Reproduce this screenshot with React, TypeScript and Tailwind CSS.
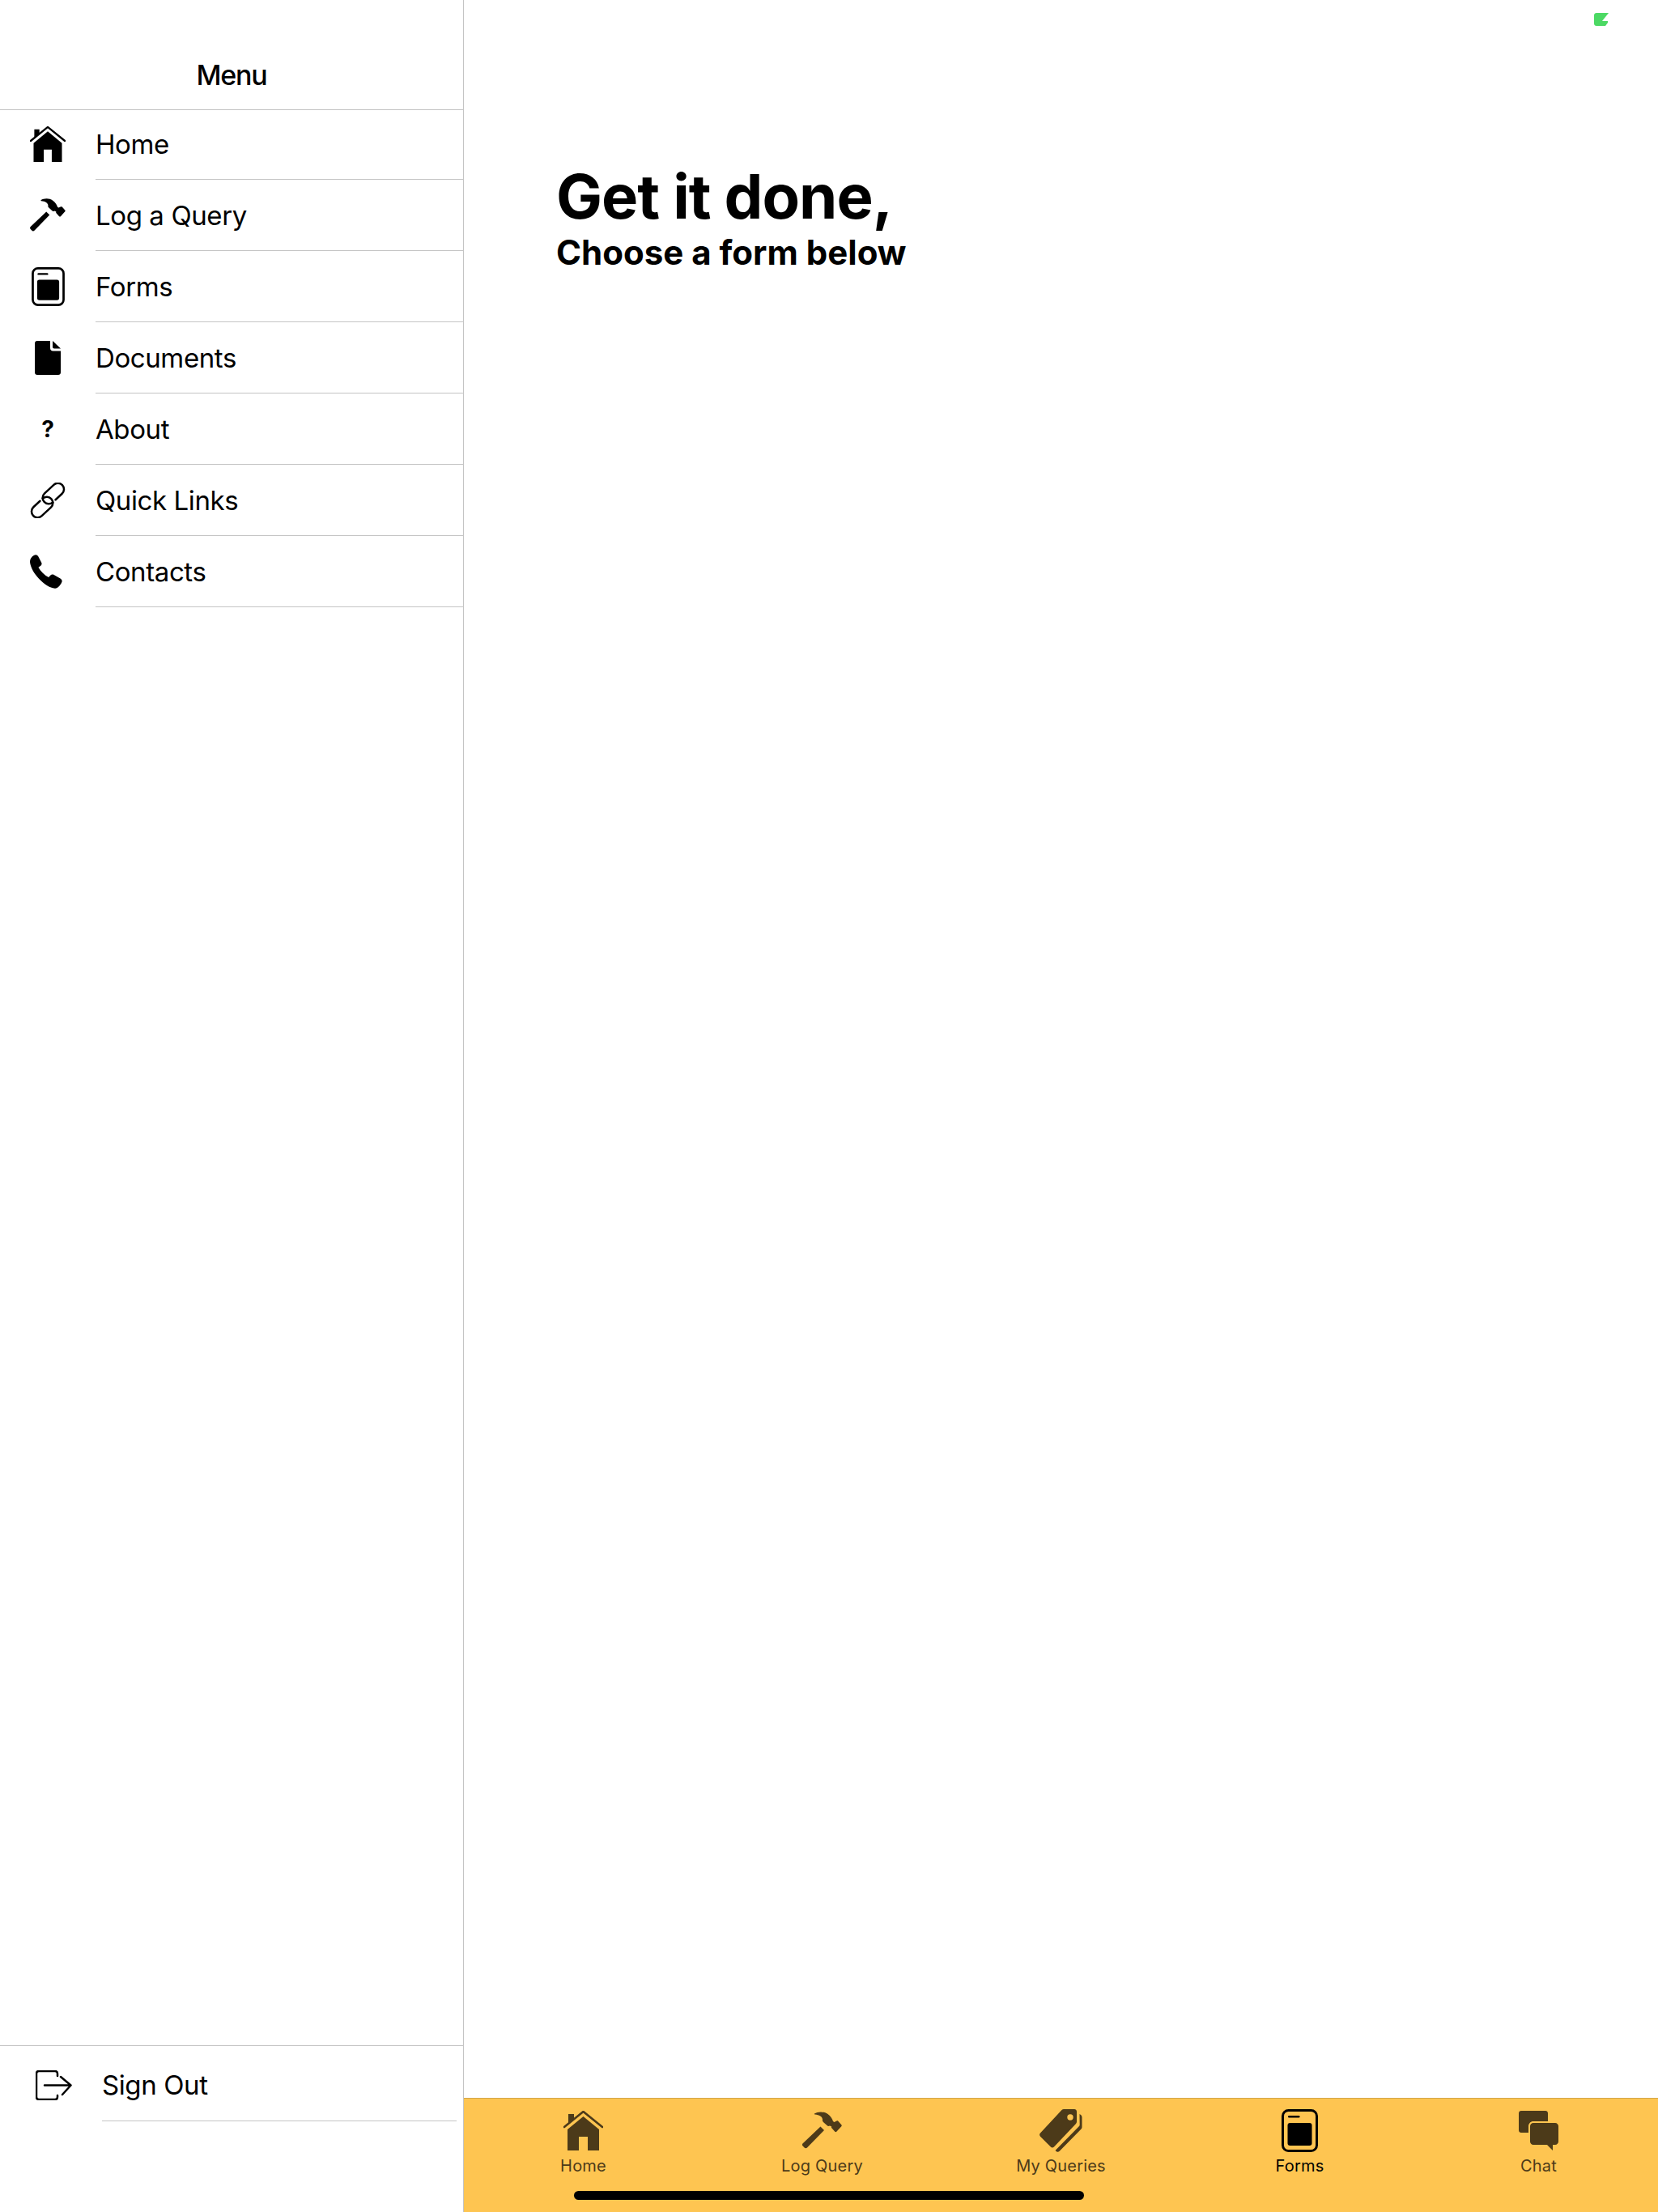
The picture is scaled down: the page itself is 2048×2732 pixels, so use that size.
import React from 'react';

const HomeIcon = ({ className }: { className: string }) => (
  <svg viewBox="0 0 49 50" className={className} fill="currentColor">
    <path d="M6 4h7v6l-7 6z" />
    <path d="M1 20 24.5 1 48 20" fill="none" stroke="currentColor" strokeWidth="2.6" strokeLinecap="round" />
    <path d="M24.5 7 44 23v26H30V32H19v17H5V23z" />
  </svg>
);

const HammerIcon = ({ className }: { className: string }) => (
  <svg viewBox="0 0 49 47" className={className} fill="currentColor">
    <path d="M22.500 18.500 27 23 6 44.500c-1 1-2.400 1-3.400 0L.7 42.600c-1-1-1-2.300 0-3.300z" />
    <path d="M15 2.500C19 0 26-.8 31.500 3c3.500 2.500 5.500 5.500 6.500 9l1.500 1 3-1.500c.7-.3 1.300-.2 1.800.3l4 4.500c.6.700.6 1.400 0 2l-6 6.500c-.6.6-1.400.6-2 0l-4-4.500c-.5-.6-.5-1.200-.1-1.900l-2.200-1c-1.200.8-2.500.6-3.500-.4l-4.500-4c-1-1-1.300-2-1-3.500C24.800 6.500 21 3.800 15.500 3.500c-.7-.1-.8-.6-.5-1z" />
  </svg>
);

const FormsIcon = ({ className }: { className: string }) => (
  <svg viewBox="0 0 45 53" className={className} fill="currentColor">
    <rect x="1.500" y="1.500" width="42" height="50" rx="7" fill="none" stroke="currentColor" strokeWidth="3" />
    <rect x="8" y="8" width="14.500" height="2.600" rx="1.300" />
    <rect x="7.500" y="17" width="30" height="28" rx="3" />
  </svg>
);

const TagIcon = ({ className }: { className: string }) => (
  <svg viewBox="0 0 53 53" className={className} fill="currentColor">
    <path
      fillRule="evenodd"
      d="M27.500 1c.8-.7 1.500-1 2.500-1h13c1.700 0 3 1.300 3 3v12.500c0 1-.3 1.800-1 2.500L18 46.500c-1.200 1.200-3 1.200-4.200 0L1 33.700c-1.200-1.200-1.200-3 0-4.200zM38 6.300a3.700 3.700 0 1 0 0 7.400 3.700 3.700 0 0 0 0-7.400z"
    />
    <path d="M49.500 6c1.600.8 3 2 3 4v12c0 1.200-.4 2-1.200 2.800L24.800 51.800c-1 1-2.300 1.400-3.500.7l-1.300-1c-.4-.3-.3-.7 0-1l29-29.500c.5-.5.700-1 .7-1.800z" />
  </svg>
);

const ChatIcon = ({ className }: { className: string }) => (
  <svg viewBox="0 0 49 49" className={className} fill="currentColor">
    <path d="M3 0h30c1.700 0 3 1.300 3 3v10H18c-3.300 0-6 2.700-6 6v8H3c-1.700 0-3-1.300-3-3V3c0-1.700 1.300-3 3-3z" />
    <path d="M18 15h27c2.200 0 4 1.800 4 4v19c0 2.200-1.800 4-4 4h-3v7l-7-7H18c-2.200 0-4-1.800-4-4V19c0-2.200 1.800-4 4-4z" />
  </svg>
);

const DocumentIcon = ({ className }: { className: string }) => (
  <svg viewBox="0 0 32 42" className={className} fill="currentColor">
    <path d="M3 0h16v9c0 2 1.300 3.500 3.500 3.500H32V39c0 1.700-1.300 3-3 3H3c-1.700 0-3-1.300-3-3V3c0-1.700 1.300-3 3-3z" />
    <path d="M22 0 32 9.500h-8c-1.200 0-2-.8-2-2z" />
  </svg>
);

const LinkIcon = ({ className }: { className: string }) => (
  <svg viewBox="0 0 44 44" className={className} fill="none" stroke="currentColor" strokeWidth="2.500" strokeLinecap="round">
    <g transform="translate(22 22) rotate(-43)">
      <path d="M7.500 6H18.500A7.500 7.500 0 0 0 18.500-9H3A7.500 7.500 0 0 0 3 6" />
      <path d="M-7.500-6H-18.500A7.500 7.500 0 0 0-18.500 9H-3A7.500 7.500 0 0 0-3-6" />
    </g>
  </svg>
);

const PhoneIcon = ({ className }: { className: string }) => (
  <svg viewBox="0 0 42 40" className={className} fill="currentColor">
    <path d="M4.500.8c2-1.300 4.300-.8 5.300 1.200l3.700 7.200c.8 1.600.3 3.200-1.200 4.200l-2.300 1.600c2.800 5 7 9 12 11.800l2-2.200c1.200-1.300 2.800-1.600 4.300-.8l7.500 4.200c2 1.200 2.600 3.200 1.400 5.200-1.400 3-4.400 6.800-7.700 6.600C17.500 38.500 1 21 0 8.500-.2 5.500 2 2.300 4.500.8z" />
  </svg>
);

const SignOutIcon = ({ className }: { className: string }) => (
  <svg viewBox="0 0 45 37" className={className} fill="none" stroke="currentColor" strokeWidth="2.500" strokeLinecap="round" strokeLinejoin="round">
    <path d="M27 7V4c0-1.700-1.300-3-3-3H4C2.300 1 1 2.300 1 4v29c0 1.700 1.300 3 3 3h20c1.700 0 3-1.300 3-3v-2" />
    <path d="M11 18.500h32M31 8l12.500 10.500L33 30" />
  </svg>
);

const menuItems = [
  { label: 'Home', icon: <HomeIcon className="w-[44px] h-[45px]" /> },
  { label: 'Log a Query', icon: <HammerIcon className="w-[44px] h-[42px]" /> },
  { label: 'Forms', icon: <FormsIcon className="w-[41px] h-[48px]" /> },
  { label: 'Documents', icon: <DocumentIcon className="w-[32px] h-[42px]" /> },
  { label: 'About', icon: <span className="text-[28px] font-bold leading-none">?</span> },
  { label: 'Quick Links', icon: <LinkIcon className="w-[44px] h-[44px]" /> },
  { label: 'Contacts', icon: <PhoneIcon className="w-[44px] h-[42px]" /> },
];

const tabs = [
  { label: 'Home', icon: <HomeIcon className="w-[49px] h-[50px]" /> },
  { label: 'Log Query', icon: <HammerIcon className="w-[49px] h-[47px]" /> },
  { label: 'My Queries', icon: <TagIcon className="w-[53px] h-[53px]" /> },
  { label: 'Forms', icon: <FormsIcon className="w-[45px] h-[53px]" />, active: true },
  { label: 'Chat', icon: <ChatIcon className="w-[49px] h-[49px]" /> },
];

const App = () => {
  return (
    <div className="relative flex w-[2048px] h-[2732px] bg-white text-black overflow-hidden font-['Inter',sans-serif]">
      {/* Sidebar */}
      <aside className="flex flex-col w-[573px] shrink-0 border-r border-[#c4c4c4]">
        <div className="flex items-center justify-center h-[136px] pt-[50px] border-b border-[#c4c4c4] text-[34px] font-medium tracking-[-1.2px]">
          Menu
        </div>
        <div className="-mt-[2px]">
          {menuItems.map((item) => (
            <div key={item.label} className="flex items-center h-[88px]">
              <div className="flex items-center justify-center w-[118px] shrink-0">{item.icon}</div>
              <div className="flex items-center flex-1 h-full pt-[2px] border-b border-[#c4c4c4] text-[33px] tracking-[-0.4px]">{item.label}</div>
            </div>
          ))}
        </div>
        <div className="flex-1" />
        <div className="h-[206px] border-t border-[#c4c4c4]">
          <div className="flex items-center h-[93px] pr-[8px]">
            <div className="flex items-center justify-center w-[126px] shrink-0 pl-[6px] pt-[3px]">
              <SignOutIcon className="w-[45px] h-[37px]" />
            </div>
            <div className="flex items-center flex-1 h-full pt-[6px] border-b border-[#c4c4c4] text-[33px] tracking-[-0.4px]">Sign Out</div>
          </div>
        </div>
      </aside>

      {/* Main */}
      <main className="flex flex-col flex-1">
        <div className="flex-1 pl-[114px] pt-[196px]">
          <h1 className="text-[76px] font-bold tracking-[-1px] leading-[92px]">Get it done,</h1>
          <h2 className="text-[42px] font-bold leading-[44px] mt-[2px]">Choose a form below</h2>
        </div>
        <nav className="flex h-[141px] bg-[#fec551] border-t border-[#d2a648]">
          {tabs.map((tab) => (
            <div
              key={tab.label}
              className={`flex flex-col items-center flex-1 pt-[12px] ${tab.active ? 'text-black' : 'text-[#4c3a19]'}`}
            >
              <div className="flex items-center justify-center h-[55px]">{tab.icon}</div>
              <span className="text-[20px] tracking-[0.2px] leading-[28px] mt-[2px]">{tab.label}</span>
            </div>
          ))}
        </nav>
      </main>

      {/* Home indicator */}
      <div className="absolute left-[709px] bottom-[15px] w-[630px] h-[11px] rounded-full bg-black" />

      {/* Status bar battery */}
      <svg viewBox="0 0 18 16" className="absolute left-[1969px] top-[16px] w-[18px] h-[16px]" fill="#4cd964">
        <path d="M3 0h15L10 10h7v2l-3 4H3c-1.700 0-3-1.300-3-3V3c0-1.700 1.300-3 3-3z" />
      </svg>
    </div>
  );
};

export default App;
